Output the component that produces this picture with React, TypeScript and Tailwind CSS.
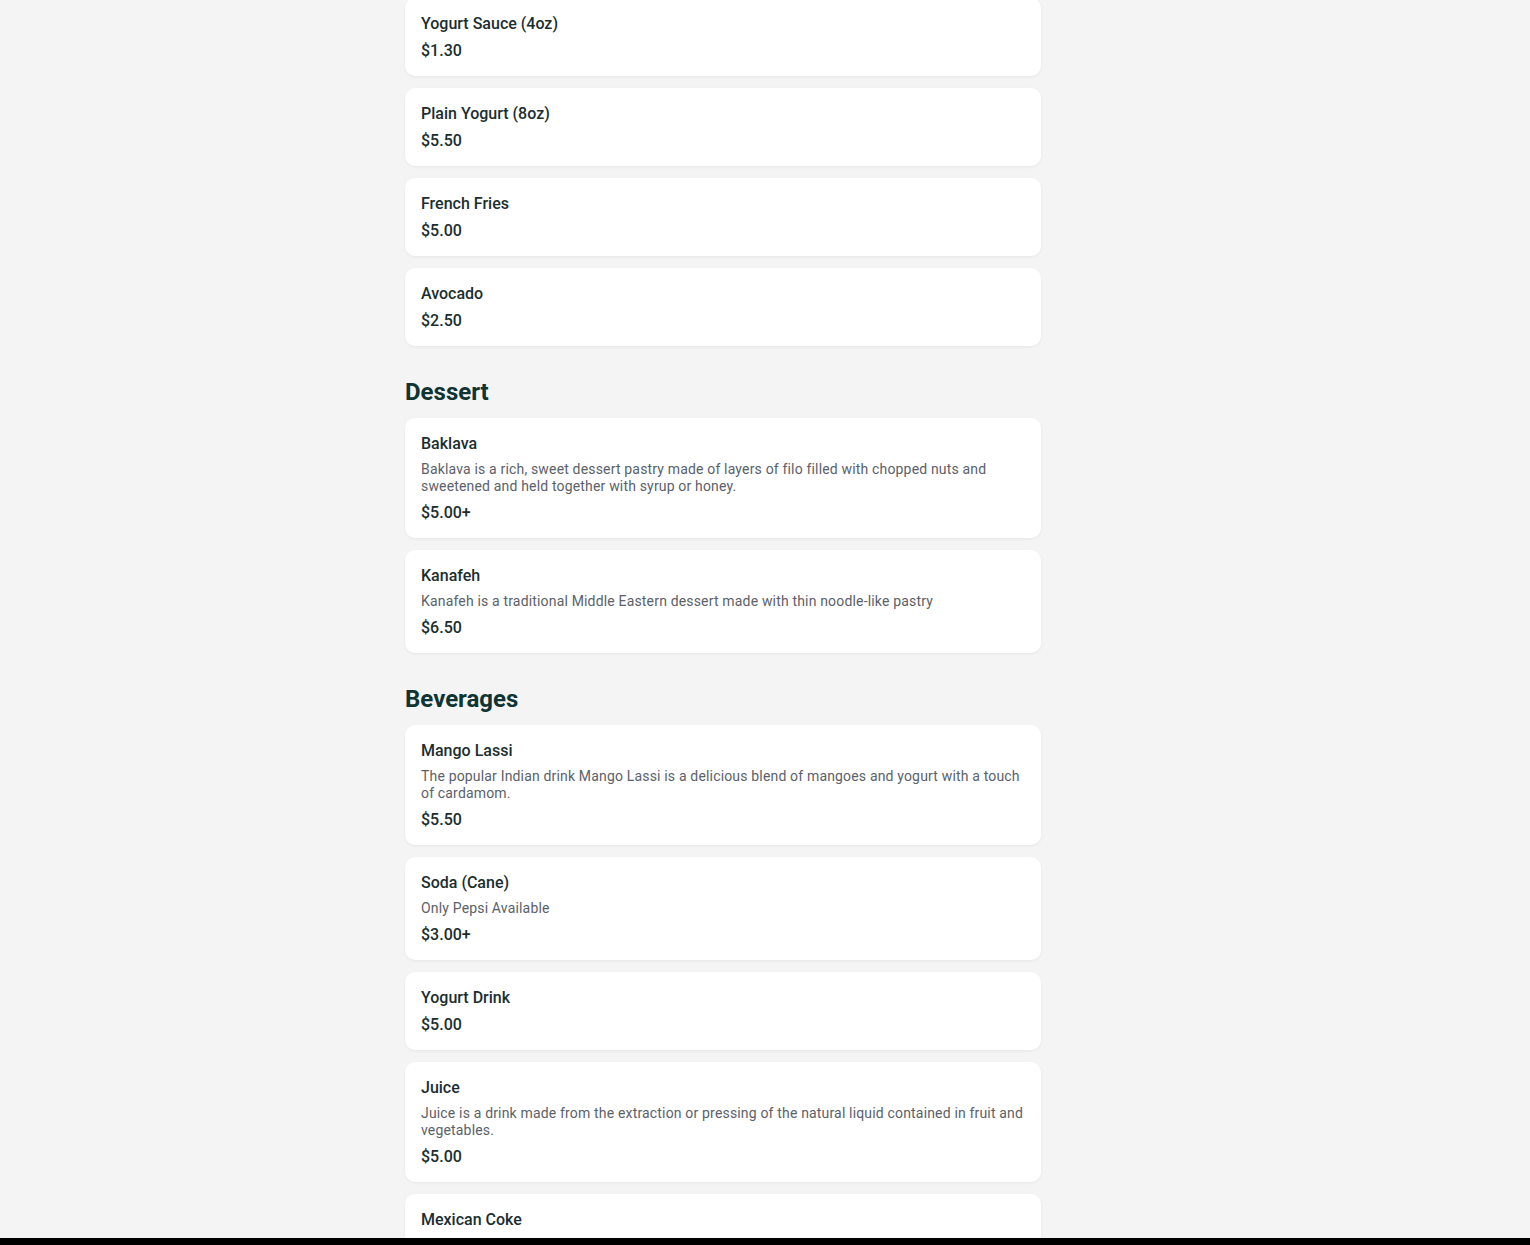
type MenuItem = {
  name: string
  price: string
  description?: string
}

type Section = {
  title?: string
  items: MenuItem[]
}

const sections: Section[] = [
  {
    items: [
      { name: 'Yogurt Sauce (4oz)', price: '$1.30' },
      { name: 'Plain Yogurt (8oz)', price: '$5.50' },
      { name: 'French Fries', price: '$5.00' },
      { name: 'Avocado', price: '$2.50' },
    ],
  },
  {
    title: 'Dessert',
    items: [
      {
        name: 'Baklava',
        description:
          'Baklava is a rich, sweet dessert pastry made of layers of filo filled with chopped nuts and sweetened and held together with syrup or honey.',
        price: '$5.00+',
      },
      {
        name: 'Kanafeh',
        description: 'Kanafeh is a traditional Middle Eastern dessert made with thin noodle-like pastry',
        price: '$6.50',
      },
    ],
  },
  {
    title: 'Beverages',
    items: [
      {
        name: 'Mango Lassi',
        description:
          'The popular Indian drink Mango Lassi is a delicious blend of mangoes and yogurt with a touch of cardamom.',
        price: '$5.50',
      },
      { name: 'Soda (Cane)', description: 'Only Pepsi Available', price: '$3.00+' },
      { name: 'Yogurt Drink', price: '$5.00' },
      {
        name: 'Juice',
        description:
          'Juice is a drink made from the extraction or pressing of the natural liquid contained in fruit and vegetables.',
        price: '$5.00',
      },
      { name: 'Mexican Coke', price: '$3.50' },
    ],
  },
]

function ItemCard({ item }: { item: MenuItem }) {
  return (
    <div className="flex flex-col rounded-[10px] bg-white px-4 pb-[14px] pt-[15px] shadow-[0_1px_3px_rgba(0,0,0,0.06)]">
      <h3 className="mb-[5px] text-base font-medium leading-[22px] text-[#1a2e30]">{item.name}</h3>
      {item.description && (
        <p className="mb-[7px] mt-[1px] text-sm leading-[17px] tracking-[0.17px] text-[#5b6169]">
          {item.description}
        </p>
      )}
      <span className="text-base font-medium leading-[22px] text-[#1a2e30]">{item.price}</span>
    </div>
  )
}

export default function App() {
  return (
    <div className="min-h-screen overflow-hidden bg-[#f4f4f4] font-['Roboto',_'Noto_Sans',sans-serif]">
      <div className="ml-[405px] mt-[-2px] w-[636px] pb-10">
        {sections.map((section, i) => (
          <section key={i} className={i > 0 ? 'mt-8' : ''}>
            {section.title && (
              <h2 className="mb-3 text-2xl font-bold leading-7 text-[#0f3433]">{section.title}</h2>
            )}
            <div className="flex flex-col gap-3">
              {section.items.map((item) => (
                <ItemCard key={item.name} item={item} />
              ))}
            </div>
          </section>
        ))}
      </div>
      {/* bottom bar */}
      <div className="fixed bottom-0 left-0 right-0 h-[7px] bg-black" />
    </div>
  )
}
